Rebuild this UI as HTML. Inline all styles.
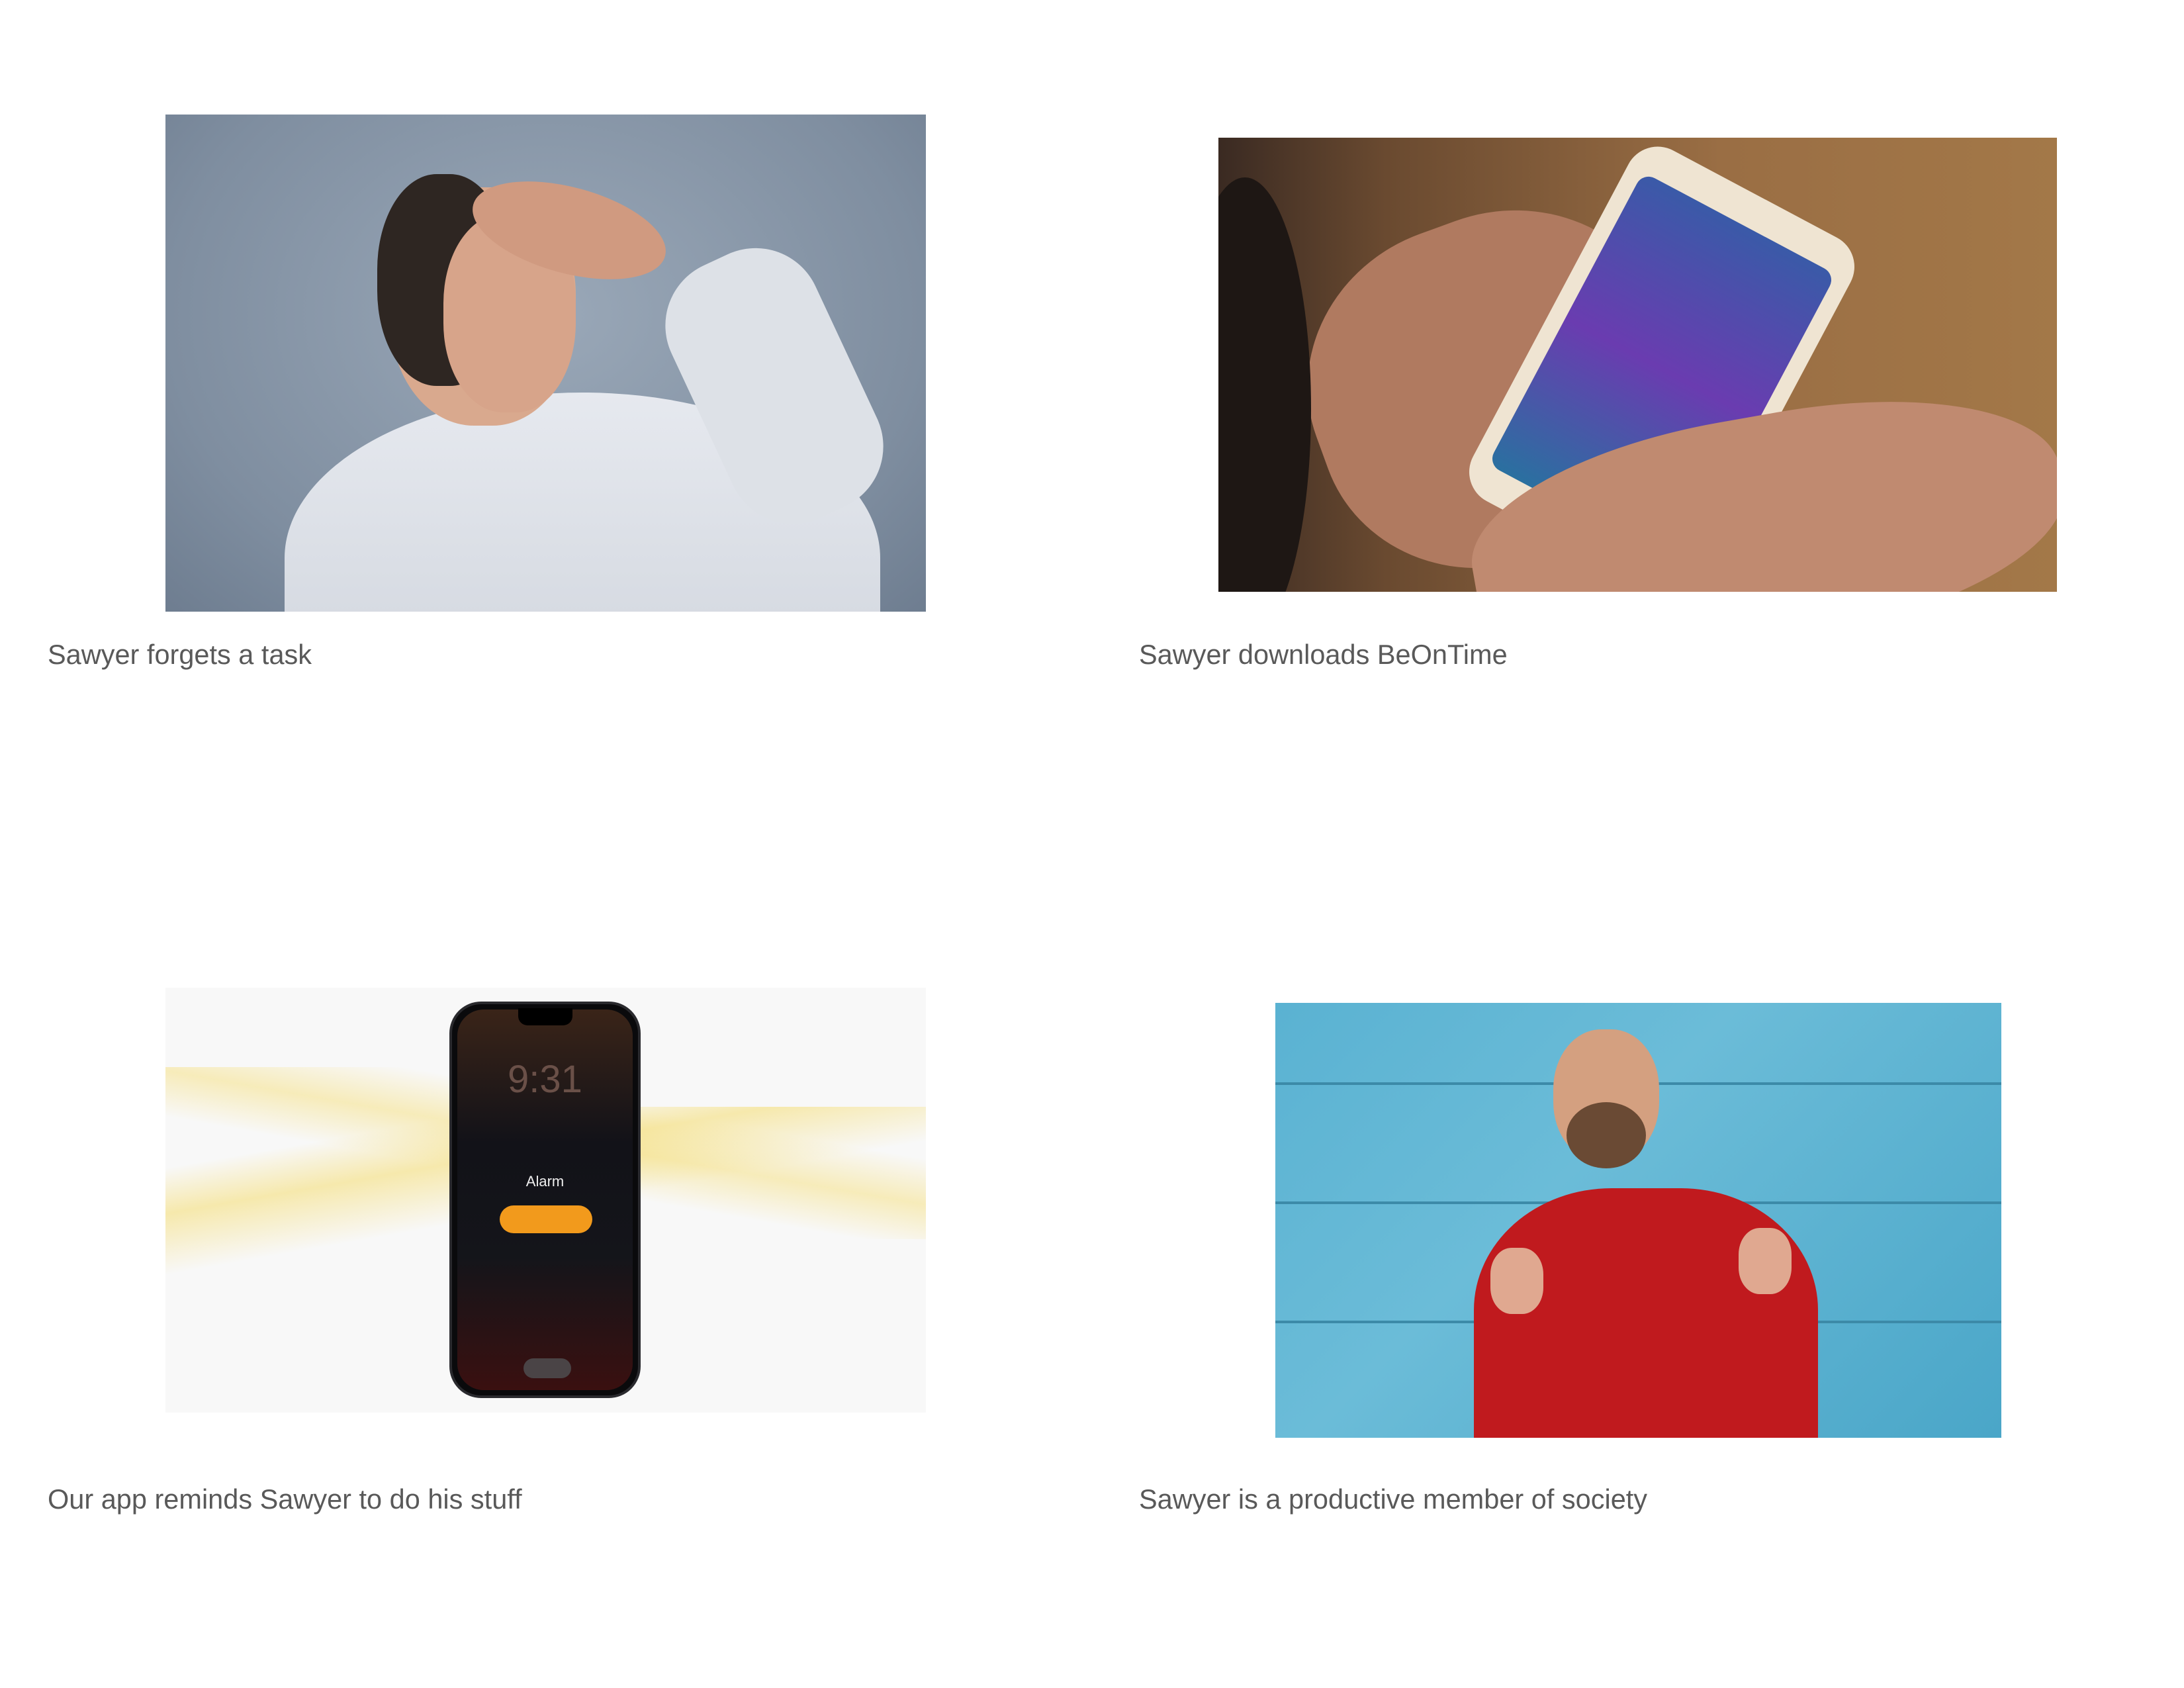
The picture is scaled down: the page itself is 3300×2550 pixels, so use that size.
<!DOCTYPE html>
<html><head><style>
body{margin:0;width:3300px;height:2550px;background:#fff;position:relative;overflow:hidden;font-family:"Liberation Sans",Arial,sans-serif}
.cap{position:absolute;font-size:41.5px;line-height:41.5px;color:#595959;white-space:nowrap}
.im{position:absolute;overflow:hidden}
</style></head><body>

<div class="im" style="left:250px;top:173px;width:1149px;height:751px;background:radial-gradient(ellipse at 50% 40%,#9aa8b8,#7f8ea0 70%,#6e7d90)">
 <div style="position:absolute;left:180px;top:420px;width:900px;height:500px;border-radius:50% 50% 0 0;background:linear-gradient(#e6e9ef,#cfd4dc)"></div>
 <div style="position:absolute;left:800px;top:200px;width:240px;height:420px;border-radius:100px;background:#dde1e7;transform:rotate(-25deg)"></div>
 <div style="position:absolute;left:340px;top:110px;width:280px;height:360px;border-radius:45%;background:#d9a98e"></div>
 <div style="position:absolute;left:320px;top:90px;width:200px;height:320px;border-radius:45%;background:#2e2622"></div>
 <div style="position:absolute;left:420px;top:150px;width:200px;height:300px;border-radius:45%;background:#d7a48a"></div>
 <div style="position:absolute;left:460px;top:110px;width:300px;height:130px;border-radius:50%;background:#d09a80;transform:rotate(15deg)"></div>
</div>

<div class="im" style="left:1841px;top:208px;width:1267px;height:686px;background:linear-gradient(90deg,#3a2a22 0%,#6a4a30 20%,#9a6e44 60%,#a37848 100%)">
 <div style="position:absolute;left:140px;top:120px;width:560px;height:520px;border-radius:45%;background:#b07a60;transform:rotate(-20deg)"></div>
 <div style="position:absolute;left:480px;top:50px;width:380px;height:600px;border-radius:50px;background:#efe4d2;transform:rotate(28deg)"></div>
 <div style="position:absolute;left:505px;top:100px;width:330px;height:500px;border-radius:20px;background:linear-gradient(#3a5aa8,#6a3cb0 50%,#2a70a0);transform:rotate(28deg)"></div>
 <div style="position:absolute;left:380px;top:420px;width:900px;height:340px;border-radius:45%;background:#c08a70;transform:rotate(-10deg)"></div>
 <div style="position:absolute;left:-60px;top:60px;width:200px;height:700px;border-radius:50%;background:#1e1714"></div>
</div>
<div class="cap" style="left:72px;top:968px">Sawyer forgets a task</div>
<div class="cap" style="left:1721px;top:968px">Sawyer downloads BeOnTime</div>

<div class="im" style="left:250px;top:1492px;width:1149px;height:642px;background:#f8f8f8">
 <div style="position:absolute;left:0;top:180px;width:1149px;height:260px;background:linear-gradient(170deg,transparent 20%,rgba(245,220,110,.55) 35%,transparent 55%)"></div>
 <div style="position:absolute;left:0;top:120px;width:1149px;height:260px;background:linear-gradient(10deg,transparent 40%,rgba(245,220,110,.45) 55%,transparent 70%)"></div>
 <div style="position:absolute;left:429px;top:21px;width:289px;height:599px;border-radius:48px;background:#0a0a0c;border:4px solid #2a2a2e;box-sizing:border-box">
  <div style="position:absolute;left:8px;top:8px;right:8px;bottom:8px;border-radius:40px;background:linear-gradient(#3a2418,#121218 35%,#14151a 65%,#3a1010)"></div>
  <div style="position:absolute;left:100px;top:6px;width:82px;height:26px;border-radius:0 0 14px 14px;background:#000"></div>
  <div style="position:absolute;left:0;width:100%;top:80px;text-align:center;font-size:58px;color:#6a5048">9:31</div>
  <div style="position:absolute;left:0;width:100%;top:255px;text-align:center;font-size:22px;color:#eee">Alarm</div>
  <div style="position:absolute;left:72px;top:304px;width:140px;height:42px;border-radius:21px;background:#f29a1c"></div>
  <div style="position:absolute;left:108px;top:535px;width:72px;height:30px;border-radius:15px;background:#4a4446"></div>
 </div>
</div>

<div class="im" style="left:1927px;top:1515px;width:1097px;height:657px;background:linear-gradient(135deg,#5ab2d2,#6bbcd8 40%,#4aa6c8)">
 <div style="position:absolute;left:0;top:120px;width:100%;height:4px;background:#3c8aa8"></div>
 <div style="position:absolute;left:0;top:300px;width:100%;height:4px;background:#3c8aa8"></div>
 <div style="position:absolute;left:0;top:480px;width:100%;height:4px;background:#3c8aa8"></div>
 <div style="position:absolute;left:300px;top:280px;width:520px;height:460px;border-radius:40% 40% 0 0;background:#c01a1e"></div>
 <div style="position:absolute;left:420px;top:40px;width:160px;height:200px;border-radius:45%;background:#d4a080"></div>
 <div style="position:absolute;left:440px;top:150px;width:120px;height:100px;border-radius:50%;background:#6a4a34"></div>
 <div style="position:absolute;left:325px;top:370px;width:80px;height:100px;border-radius:40%;background:#e0a890"></div>
 <div style="position:absolute;left:700px;top:340px;width:80px;height:100px;border-radius:40%;background:#e0a890"></div>
</div>
<div class="cap" style="left:72px;top:2244px">Our app reminds Sawyer to do his stuff</div>
<div class="cap" style="left:1721px;top:2244px">Sawyer is a productive member of society</div>
</body></html>
